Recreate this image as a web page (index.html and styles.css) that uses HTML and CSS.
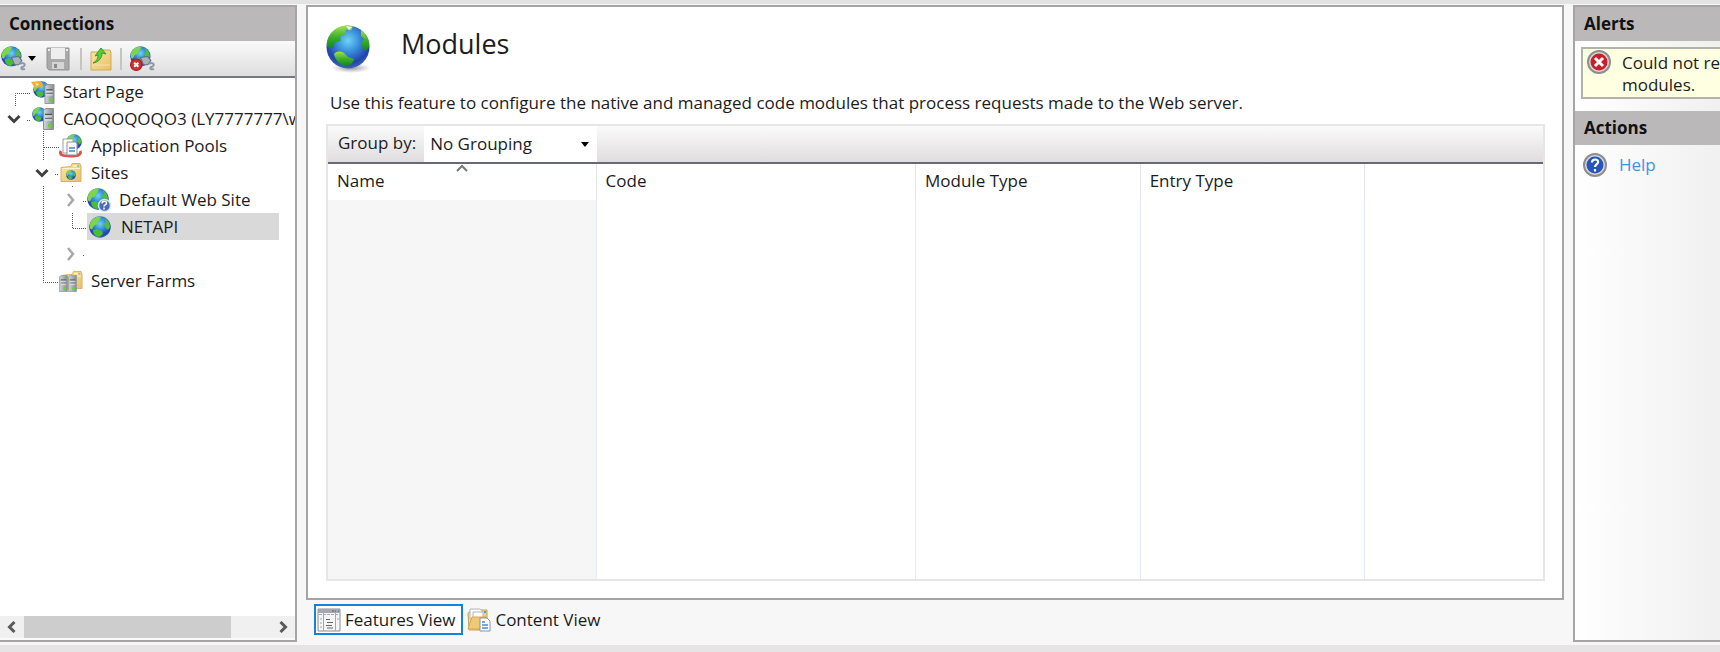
FILE: index.html
```html
<!DOCTYPE html>
<html lang="en">
<head>
<meta charset="utf-8">
<title>Modules</title>
<link rel="stylesheet" href="styles.css">
</head>
<body>
<svg class="defs" aria-hidden="true">
  <defs>
    <radialGradient id="sea" cx="0.5" cy="0.35" r="0.65">
      <stop offset="0" stop-color="#6fd3f6"/><stop offset="0.4" stop-color="#3a8fdc"/><stop offset="0.8" stop-color="#2343ac"/><stop offset="1" stop-color="#3f63bd"/>
    </radialGradient>
    <linearGradient id="land" x1="0" y1="0" x2="0" y2="1">
      <stop offset="0" stop-color="#a4e04e"/><stop offset="0.5" stop-color="#3bb02c"/><stop offset="1" stop-color="#16831f"/>
    </linearGradient>
    <linearGradient id="paper" x1="0" y1="0" x2="1" y2="1">
      <stop offset="0" stop-color="#fbe6a8"/><stop offset="1" stop-color="#e8c068"/>
    </linearGradient>
    <linearGradient id="metal" x1="0" y1="0" x2="1" y2="0">
      <stop offset="0" stop-color="#d4d8dc"/><stop offset="1" stop-color="#858b91"/>
    </linearGradient>
    <radialGradient id="shade"><stop offset="0" stop-color="#777" stop-opacity="0.8"/><stop offset="1" stop-color="#999" stop-opacity="0"/></radialGradient>
    <symbol id="globe" viewBox="0 0 44 44">
      <circle cx="22" cy="22" r="21.5" fill="url(#sea)"/>
      <path d="M1 21C0 11 9 1 20 .6l7 1-2 4-5-1-1 5-5 2 1 4-6 2-2 5-3 1z" fill="url(#land)"/>
      <path d="M35 5c6 4 9 10 8 17l-3 4-4-3-1-5 3-4-3-3z" fill="url(#land)"/>
      <path d="M8 29c3-3 6-3 10-1l4 4 6 2c-1 5-5 7-10 7-4-1-9-6-10-12z" fill="url(#land)"/>
      <path d="M20 1l3 4 3-3z" fill="#f4fbe6"/>
    </symbol>
    <symbol id="small-globe" viewBox="0 0 22 22">
      <circle cx="11" cy="11" r="10.7" fill="url(#sea)"/>
      <path d="M1 8C2 4 6 1 10 .5l2 1-2 3-2 4-3 1-2 4-2-1z" fill="#7dd64a"/>
      <path d="M15 2c4 2 6 5 6 9l-2 3-3-3-1-3 2-2z" fill="#4fc03a"/>
      <path d="M4 14l4-1 5 2 1 3-4 3c-3 0-6-3-6-7z" fill="#45bf34"/>
    </symbol>
    <symbol id="server" viewBox="0 0 11 22">
      <path d="M.5 2L3 .5h7.5v21H.5z" fill="url(#metal)" stroke="#8a9096"/>
      <path d="M2 6.500h7" stroke="#4d545b" stroke-width="1.500"/><path d="M2 10.500h7" stroke="#6d747b"/>
      <path d="M2 8h7M2 12h7" stroke="#eef1f3"/>
      <circle cx="7" cy="17.500" r="2" fill="#59dc24"/>
    </symbol>
    <symbol id="folder" viewBox="0 0 22 20">
      <path d="M1 5l10-1 1-3h8l1 3v15H1z" fill="url(#paper)" stroke="#d6b06a"/>
      <path d="M13 3.500h4" stroke="#fff"/><path d="M17 3.500h2" stroke="#58a5e0"/>
      <path d="M2 6h18" stroke="#fff3cb"/>
    </symbol>
    <symbol id="plug" viewBox="0 0 24 24">
      <use href="#small-globe" x="0" y="0" width="20" height="20"/>
      <path d="M10 11l7-1 3 4-3 4h-4z" fill="#a9b3bc" stroke="#66717c"/>
      <path d="M18 17c5-2 6 2 3 3s-1 3 2 2" fill="none" stroke="#8c9aa7" stroke-width="2"/>
    </symbol>
    <symbol id="down" viewBox="0 0 14 14"><path d="M1.500 4L7 9.500 12.500 4" fill="none" stroke="#404040" stroke-width="3"/></symbol>
    <symbol id="right" viewBox="0 0 14 14"><path d="M5 1l5 6-5 6" fill="none" stroke="#a8a8a8" stroke-width="2.500"/></symbol>
  </defs>
</svg>

<div class="app">
  <aside class="panel connections">
    <h2 class="bar">Connections</h2>
    <div class="toolbar">
      <button class="tool" aria-label="Connect"><svg width="25" height="25"><use href="#plug"/></svg><svg class="caret" width="8" height="5"><path d="M0 0h8L4 5z"/></svg></button>
      <button class="tool save" aria-label="Save"><svg width="24" height="24" viewBox="0 0 24 24"><path d="M1 1h22v22H3l-2-2z" fill="#aaa" stroke="#929292"/><path d="M5 1h14v11H5z" fill="#eee"/><path d="M2 2h2v2H2zM20 2h2v2h-2z" fill="#eee"/><path d="M6 15h12v7H6z" fill="#d5d5d5"/><path d="M8 17h3v4H8z" fill="#8b8b8b"/></svg></button>
      <span class="split"></span>
      <button class="tool" aria-label="Up"><svg width="22" height="24" viewBox="0 0 22 24"><path d="M1 5h10l1-2h8l1 3v17H1z" fill="url(#paper)" stroke="#d3a855"/><path d="M2 18h18" stroke="#f8e2a4"/><path d="M3 16c4-2 5-5 5-8l-3 1 6-8 5 6-4-1c0 5-3 9-9 10z" fill="#55cf35" stroke="#349c24"/></svg></button>
      <span class="split"></span>
      <button class="tool" aria-label="Disconnect"><svg width="25" height="25" viewBox="0 0 24 24"><use href="#plug" width="24" height="24"/><circle cx="6" cy="18" r="5.500" fill="#cf2f32" stroke="#a5191e"/><path d="M4 16l4 4M8 16l-4 4" stroke="#fff" stroke-width="2"/></svg></button>
    </div>
    <div class="tree">
      <svg class="lines" width="100" height="210" aria-hidden="true">
        <path d="M15.500 28V15.500H31M27 42.500h4M43.500 53v29M44 69.500h15M55 96.500h4M43.500 108v96.500H59M72.500 108v2M83 123.500h4M72.500 135v15.500H87M83 177.500h1"/>
      </svg>
      <ul class="nodes">
        <li class="node level1"><span class="twisty"></span><svg width="24" height="24"><use href="#small-globe" x="2" y="1" width="17" height="17"/><path d="M0 2l9-1 3 3-1 4-3-2-3 3-3-4z" fill="#f3ad2f"/><path d="M4 3l4 1-2 2z" fill="#fff0be"/><use href="#server" x="13" y="4" width="11" height="20"/></svg>Start Page</li>
        <li class="node level1"><button class="twisty" aria-label="Collapse"><svg width="14" height="14"><use href="#down"/></svg></button><svg width="24" height="24"><use href="#small-globe" x="1" y="0" width="15" height="15"/><use href="#server" x="12" y="1" width="11" height="22"/></svg>CAOQOQOQO3 (LY7777777\w</li>
        <li class="node level2"><span class="twisty"></span><svg width="24" height="24"><use href="#small-globe" x="7" y="0" width="16" height="16"/><path d="M2 17C0 21 4 22 11 22s12-1 10-5" fill="none" stroke="#d2584e" stroke-width="3"/><path d="M4 5h10v14H4z" fill="#fff" stroke="#989da5"/><path d="M8 8h9l1 2v11H8z" fill="#f8faff" stroke="#8e949c"/><path d="M10 14h6M10 17h6" stroke="#4784cf" stroke-width="1.500"/></svg>Application Pools</li>
        <li class="node level2"><button class="twisty" aria-label="Collapse"><svg width="14" height="14"><use href="#down"/></svg></button><svg width="24" height="24"><use href="#folder" x="1" y="1" width="22" height="21"/><use href="#small-globe" x="7" y="9" width="10" height="10"/></svg>Sites</li>
        <li class="node level3"><button class="twisty" aria-label="Expand"><svg width="14" height="14"><use href="#right"/></svg></button><svg width="24" height="24"><use href="#small-globe" x="0" y="0" width="22" height="22"/><circle cx="17.500" cy="17.500" r="6" fill="#4a6db3" stroke="#dae6f7" stroke-width="1.500"/><path d="M15 15.500c0-3 5-3 4.500 0-.4 1.500-2.500 1.500-2.500 3M17 19.500v2" fill="none" stroke="#fff" stroke-width="1.500"/></svg>Default Web Site</li>
        <li class="node level3 selected"><span class="twisty"></span><span class="pick"><svg width="24" height="24"><use href="#small-globe" x="2" y="1" width="22" height="22"/></svg>NETAPI</span></li>
        <li class="node level3"><button class="twisty" aria-label="Expand"><svg width="14" height="14"><use href="#right"/></svg></button></li>
        <li class="node level2"><span class="twisty"></span><svg width="24" height="24"><use href="#folder" x="3" y="1" width="21" height="20"/><use href="#server" x="0" y="6" width="9" height="17"/><use href="#server" x="9" y="6" width="9" height="17"/></svg>Server Farms</li>
      </ul>
    </div>
    <div class="scroll">
      <button class="arrow" aria-label="Scroll left"><svg width="10" height="12"><path d="M7.500 1l-5 5 5 5"/></svg></button>
      <div class="track"><div class="thumb"></div></div>
      <button class="arrow" aria-label="Scroll right"><svg width="10" height="12"><path d="M2.500 1l5 5-5 5"/></svg></button>
    </div>
  </aside>

  <main class="work">
    <section class="panel feature">
      <header class="heading">
        <svg width="48" height="48" aria-hidden="true"><ellipse cx="25" cy="43" rx="20" ry="5" fill="url(#shade)"/><use href="#globe" x="0" y="0" width="44" height="44"/></svg>
        <h1>Modules</h1>
      </header>
      <p class="about">Use this feature to configure the native and managed code modules that process requests made to the Web server.</p>
      <div class="list">
        <div class="grouping">
          <label for="group">Group by:</label>
          <span class="pull"><select id="group"><option>No Grouping</option></select><svg class="caret" width="8" height="5"><path d="M0 0h8L4 5z"/></svg></span>
        </div>
        <table>
          <thead><tr>
            <th class="name" aria-sort="ascending">Name<svg class="sort" width="12" height="8"><path d="M1 7l5-5 5 5"/></svg></th><th>Code</th><th>Module Type</th><th>Entry Type</th><th></th>
          </tr></thead>
          <tbody><tr><td></td><td></td><td></td><td></td><td></td></tr></tbody>
        </table>
      </div>
    </section>
    <nav class="views">
      <button class="view current"><svg width="24" height="24" viewBox="0 0 24 24"><path d="M1 1h22v22H1z" fill="#f5f5f5" stroke="#8d8d8d"/><path d="M1 1h22v4H1z" fill="#a3a9b3"/><path d="M15 3h2M18 3h1M21 3h1" stroke="#4a5f8c"/><path d="M2 6.500h20" stroke="#aaa" stroke-dasharray="3 1"/><path d="M6.500 5v18M18.500 5v18" stroke="#a8a8a8"/><path d="M3 11h2M3 15h2M3 19h2M20 11h2" stroke="#9ab"/><path d="M9 11.500h4M10 14.500h6M9 17.500h6M10 20h6" stroke="#666"/></svg>Features View</button>
      <button class="view"><svg width="24" height="24" viewBox="0 0 24 24"><path d="M1 5l5-3h14v7l-1 13H2z" fill="url(#paper)" stroke="#c7a057"/><path d="M3 1h10l2 2v8H3z" fill="#fff" stroke="#b4b4b4"/><path d="M6 4h10v6H6z" fill="#fff" stroke="#b4b4b4"/><path d="M17 4h2" stroke="#4aa3e0" stroke-width="2"/><path d="M5 9h14l-4 12H1z" fill="#eec976" stroke="#d4a856"/><path d="M13 10h7l3 3v10H13z" fill="#fff" stroke="#8b929b"/><path d="M15 14h3M15 17h6M15 20h6" stroke="#4b8bd2" stroke-width="1.500"/></svg>Content View</button>
    </nav>
  </main>

  <aside class="panel side">
    <h2 class="bar">Alerts</h2>
    <div class="alert">
      <svg width="24" height="24" viewBox="0 0 24 24"><circle cx="12" cy="12" r="11" fill="#d8d8d8" stroke="#8e8e8e" stroke-width="2"/><circle cx="12" cy="12" r="8.500" fill="#cb1e28"/><path d="M8 8l8 8M16 8l-8 8" stroke="#fff" stroke-width="3"/></svg>
      <p>Could not re<br>modules.</p>
    </div>
    <h2 class="bar">Actions</h2>
    <a class="help" href="#help"><svg width="24" height="24" viewBox="0 0 24 24"><circle cx="12" cy="12" r="11" fill="#d8d8d8" stroke="#8e8e8e" stroke-width="2"/><circle cx="12" cy="12" r="8.500" fill="#2953be"/><path d="M9 9.500c0-4 7-4 6 0-.500 2-3 2-3 4.500M12 16v2.500" fill="none" stroke="#fff" stroke-width="2.200"/></svg>Help</a>
  </aside>
</div>
</body>
</html>
```
FILE: styles.css
```css
* { box-sizing: border-box; }
body {
  margin: 0;
  font: 17px/22px "Open Sans", "Noto Sans", sans-serif;
  color: #1c1c1c;
  background: #f7f7f7;
  overflow: hidden;
}
h1, h2, p, ul { margin: 0; padding: 0; font-weight: normal; }
button, select { font: inherit; color: inherit; border: 0; padding: 0; background: none; }
svg { flex: none; display: block; }
.defs { position: absolute; width: 0; height: 0; }
.app {
  display: flex;
  gap: 9px;
  height: 100vh;
  border-top: 4px solid #e3e3e3;
  border-bottom: 7px solid #e6e4e5;
  padding: 1px 0 3px;
}
.panel { border: 2px solid #a5a5a5; background: #fff; }
.bar {
  padding: 6px 8px 7px 9px;
  font-size: 17px;
  line-height: 21px;
  font-weight: bold;
  color: #111;
  background: #bbb8b9;
}
.connections {
  flex: none;
  width: 297px;
  border-left: 0;
  display: flex;
  flex-direction: column;
  overflow: hidden;
}
.toolbar {
  flex: none;
  display: flex;
  align-items: center;
  gap: 8px;
  height: 37px;
  padding-left: 1px;
  border-bottom: 2px solid #77778a;
  background: linear-gradient(#fafafa, #dedede);
}
.tool { display: flex; align-items: center; gap: 2px; }
.save { margin: 0 2px; }
.split { width: 2px; height: 22px; background: #c5c5b8; }
.tree { position: relative; flex: 1; }
.lines { position: absolute; left: 0; top: 0; }
.lines path { fill: none; stroke: #555; stroke-dasharray: 1 1; }
.nodes { list-style: none; }
.node { display: flex; align-items: center; gap: 8px; height: 27px; white-space: nowrap; }
.twisty { flex: none; width: 16px; }
.level1 { padding-left: 7px; }
.level2 { padding-left: 35px; }
.level3 { padding-left: 63px; }
.pick {
  display: flex;
  align-items: center;
  gap: 10px;
  width: 192px;
  height: 27px;
  background: #d9d9d9;
}
.scroll { display: flex; height: 24px; background: #f0f0f0; border-bottom: 2px solid #fafafa; }
.arrow { width: 24px; display: grid; place-items: center; }
.arrow path { fill: none; stroke: #5a5a5a; stroke-width: 3; }
.track { flex: 1; }
.thumb { width: 84%; height: 100%; background: #cdcdcd; }
.work { flex: 1; min-width: 0; display: flex; flex-direction: column; }
.feature { flex: 1; display: flex; flex-direction: column; padding: 18px 17px 17px 18px; }
.heading { display: flex; gap: 27px; height: 67px; }
h1 { font-size: 27px; line-height: 38px; }
.about { padding: 0 4px; margin-bottom: 10px; white-space: nowrap; }
.list { flex: 1; display: flex; flex-direction: column; border: 2px solid #e6e6e6; }
.grouping {
  display: flex;
  align-items: stretch;
  height: 36px;
  background: linear-gradient(#fbfafa, #dfdddd);
}
.grouping label { padding: 6px 8px 0 10px; }
.pull { position: relative; width: 173px; }
.pull select { appearance: none; width: 100%; height: 100%; padding: 0 6px; background: #fff; }
.pull .caret { position: absolute; right: 8px; top: 16px; }
table { flex: 1; display: flex; flex-direction: column; border-top: 2px solid #68687c; }
thead, tbody { display: flex; }
tbody { flex: 1; }
tr { flex: 1; display: grid; grid-template-columns: 269fr 320fr 225fr 225fr 178fr; }
th { height: 36px; padding: 6px 9px; text-align: left; font-weight: normal; border-right: 1px solid #e6e6e6; }
td { padding: 0; border-right: 1px solid #e4ecf6; }
th:last-child, td:last-child { border-right: 0; }
td:first-child { background: #f6f6f6; }
.name { position: relative; }
.sort { position: absolute; left: 48%; top: 0; }
.sort path { fill: none; stroke: #777; stroke-width: 2; }
.views { display: flex; gap: 1px; padding: 4px 8px 7px; }
.view { display: flex; align-items: center; gap: 4px; height: 31px; padding: 0 6px 0 1px; border: 2px solid transparent; }
.current { border-color: #1583de; background: #fff; }
.side { flex: none; width: 147px; border-right: 0; overflow: hidden; background: linear-gradient(90deg, #fff, #f0f0f0); }
.alert {
  display: flex;
  gap: 11px;
  margin: 6px 0 12px 6px;
  padding: 1px 0 0 4px;
  border: 2px solid #b3b3ac;
  border-right: 0;
  background: #ffffe1;
}
.alert p { padding: 2px 0 1px; white-space: nowrap; }
.help { display: flex; align-items: center; gap: 12px; padding: 8px; color: #3c96dd; text-decoration: none; }
```
